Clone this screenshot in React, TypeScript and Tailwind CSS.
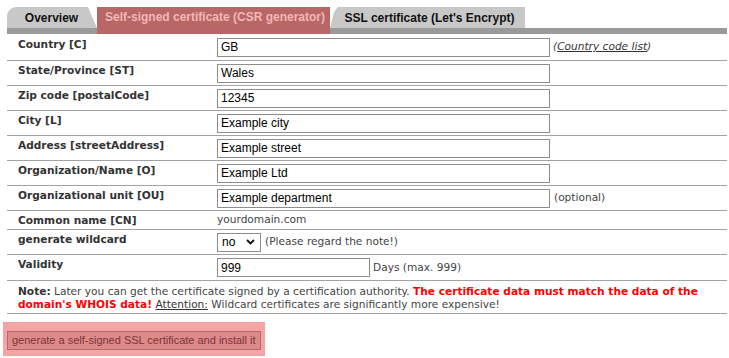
import React from "react";

const labelFont = { fontFamily: '"DejaVu Sans", Verdana, sans-serif' };

function Row({
  label,
  h = "h-[25px]",
  pt = "pt-[3px]",
  children,
}: {
  label: string;
  h?: string;
  pt?: string;
  children?: React.ReactNode;
}) {
  return (
    <div className={`flex border-b border-[#a3a3a3] ${h}`}>
      <div className={`w-[205px] shrink-0 pl-[11px] ${pt} font-bold text-[10.6px] leading-[13px] text-[#333]`}>
        {label}
      </div>
      <div className="flex items-center">{children}</div>
    </div>
  );
}

function Input({ value, w = "w-[333px]" }: { value: string; w?: string }) {
  return (
    <input
      readOnly
      value={value}
      className={`ml-[5px] ${w} h-[19px] border border-[#8d8d8d] bg-white px-[3px] text-[12px] text-black outline-none [font-family:'Liberation_Sans',Arial,sans-serif]`}
    />
  );
}

export default function App() {
  return (
    <div
      className="w-[729px] h-[358px] bg-white overflow-hidden"
      style={labelFont}
    >
      <div className="ml-[7px] w-[720px]">
        {/* Tabs */}
        <div className="mt-[7px] flex items-start border-b-[6px] border-[#9a9a9a] h-[27px] [font-family:'Liberation_Sans',Arial,sans-serif] font-bold text-[12px]">
          <div className="w-[90px] h-[21px] bg-[#c8c8c8] rounded-tl-[9px] [clip-path:polygon(0_0,81px_0,90px_100%,0_100%)] flex items-center justify-center text-[#111] pr-[1px]">
            Overview
          </div>
          <div className="w-[233px] h-[27px] -mb-[6px] bg-[#b86767] text-[#f4b6b6] flex justify-center pt-[3px] pl-[3px]">
            <span className="leading-[15px]">Self-signed certificate (CSR generator)</span>
          </div>
          <div className="w-[195px] h-[21px] bg-[#c8c8c8] [clip-path:polygon(0_100%,4px_5px,8px_0,195px_0,195px_100%)] flex items-center justify-center pl-[4px] text-[#111]">
            SSL certificate (Let's Encrypt)
          </div>
        </div>

        {/* Form rows */}
        <Row label="Country [C]" h="h-[27px]" pt="pt-[4px]">
          <Input value="GB" />
          <span className="ml-[3px] text-[10.6px] italic text-[#444]">
            (<span className="underline text-[#333]">Country code list</span>)
          </span>
        </Row>
        <Row label="State/Province [ST]">
          <Input value="Wales" />
        </Row>
        <Row label="Zip code [postalCode]">
          <Input value="12345" />
        </Row>
        <Row label="City [L]">
          <Input value="Example city" />
        </Row>
        <Row label="Address [streetAddress]">
          <Input value="Example street" />
        </Row>
        <Row label="Organization/Name [O]">
          <Input value="Example Ltd" />
        </Row>
        <Row label="Organizational unit [OU]">
          <Input value="Example department" />
          <span className="ml-[4px] text-[10.6px] text-[#444]">(optional)</span>
        </Row>
        <Row label="Common name [CN]" h="h-[19px]">
          <span className="ml-[5px] text-[10.6px] text-[#444]">yourdomain.com</span>
        </Row>
        <Row label="generate wildcard">
          <div className="ml-[5px] w-[44px] h-[19px] border border-[#8d8d8d] bg-white flex items-center justify-between pl-[4px] pr-[5px] text-[12px] text-black [font-family:'Liberation_Sans',Arial,sans-serif]">
            <span>no</span>
            <svg width="9" height="6" viewBox="0 0 9 6">
              <path d="M1 1 L4.5 4.5 L8 1" fill="none" stroke="#111" strokeWidth="1.8" />
            </svg>
          </div>
          <span className="ml-[4px] text-[10.6px] text-[#444]">(Please regard the note!)</span>
        </Row>
        <Row label="Validity" h="h-[26px]">
          <Input value="999" w="w-[153px]" />
          <span className="ml-[3px] text-[10.6px] text-[#444]">Days (max. 999)</span>
        </Row>

        {/* Note */}
        <div className="h-[33px] border-b border-[#a3a3a3] pl-[11px] pt-[4px] text-[10.6px] leading-[13px] text-[#444]">
          <b className="text-[#333]">Note:</b> Later you can get the certificate signed by a
          certification authority.{" "}
          <b className="text-[#ff0000]">
            The certificate data must match the data of the
            <br />
            domain's WHOIS data!
          </b>{" "}
          <span className="underline text-[#333]">Attention:</span> Wildcard certificates are
          significantly more expensive!
        </div>
      </div>

      {/* Button */}
      <div className="ml-[3px] mt-[8px] w-fit bg-[#f3a5a5] px-[4px] py-[5px]">
        <button className="h-[19px] border border-[#b46a6a] bg-[#df8a8a] px-[4px] text-[11px] leading-[17px] text-[#7a3535] [font-family:'Liberation_Sans',Arial,sans-serif]">
          generate a self-signed SSL certificate and install it
        </button>
      </div>
    </div>
  );
}
